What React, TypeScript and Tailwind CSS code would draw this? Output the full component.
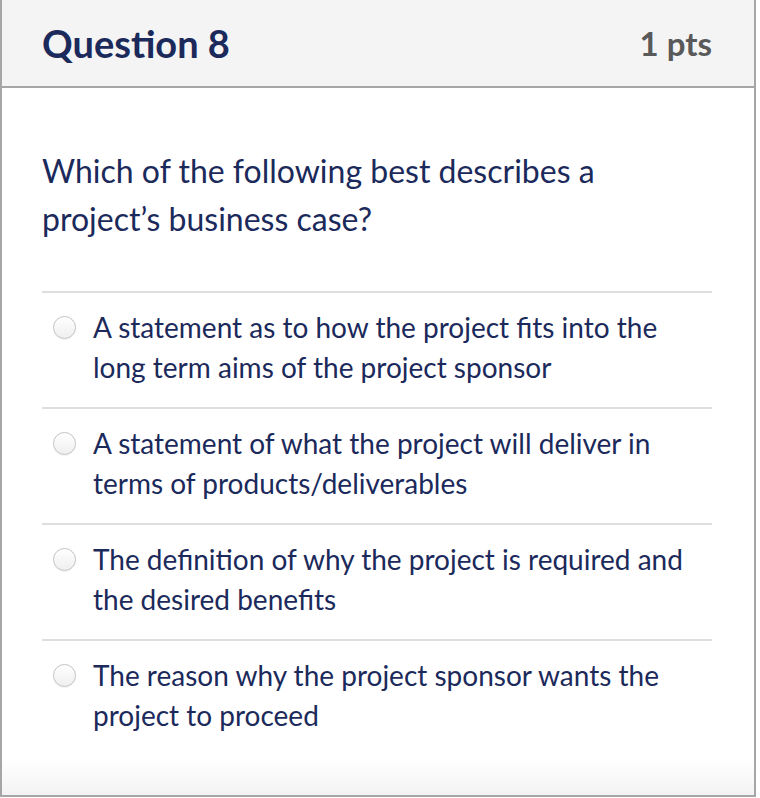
import React from "react";

const answers = [
  ["A statement as to how the project fits into the", "long term aims of the project sponsor"],
  ["A statement of what the project will deliver in", "terms of products/deliverables"],
  ["The definition of why the project is required and", "the desired benefits"],
  ["The reason why the project sponsor wants the", "project to proceed"],
];

function Radio() {
  return (
    <span className="mt-[9px] ml-[11px] mr-[17px] h-[23px] w-[23px] shrink-0 rounded-full border border-[#c3c3c3] bg-gradient-to-b from-[#ffffff] to-[#efefef] shadow-[inset_0_1px_1px_rgba(255,255,255,0.9),0_0.5px_1px_rgba(0,0,0,0.08)]" />
  );
}

export default function App() {
  return (
    <div
      className="flex h-[797px] w-[756px] flex-col border-x-2 border-b-2 border-[#a6a6a6] bg-white text-[#1b2a5b]"
      style={{ fontFamily: "Lato, 'Noto Sans', sans-serif" }}
    >
      <div className="flex h-[88px] shrink-0 items-center justify-between border-b-2 border-[#a6a6a6] bg-[#f4f4f4] pl-10 pr-[42px]">
        <h2 className="text-[38px] font-bold leading-none text-[#1b2a5b]">Question 8</h2>
        <span className="text-[33px] font-bold leading-none text-[#595959]">1 pts</span>
      </div>
      <div className="flex flex-1 flex-col bg-gradient-to-b from-white from-[95%] to-[#f3f3f3] pl-10 pr-[42px] pt-[59px]">
        <p className="text-[32px] leading-[48px]">
          Which of the following best describes a
          <br />
          project’s business case?
        </p>
        <div className="mt-[48px]">
          {answers.map((a, i) => (
            <div key={i} className="flex border-t-2 border-[#dedede] pt-[14px] pb-[20px]">
              <Radio />
              <div className="text-[28px] leading-[40px]">
                {a[0]}
                <br />
                {a[1]}
              </div>
            </div>
          ))}
        </div>
      </div>
    </div>
  );
}
